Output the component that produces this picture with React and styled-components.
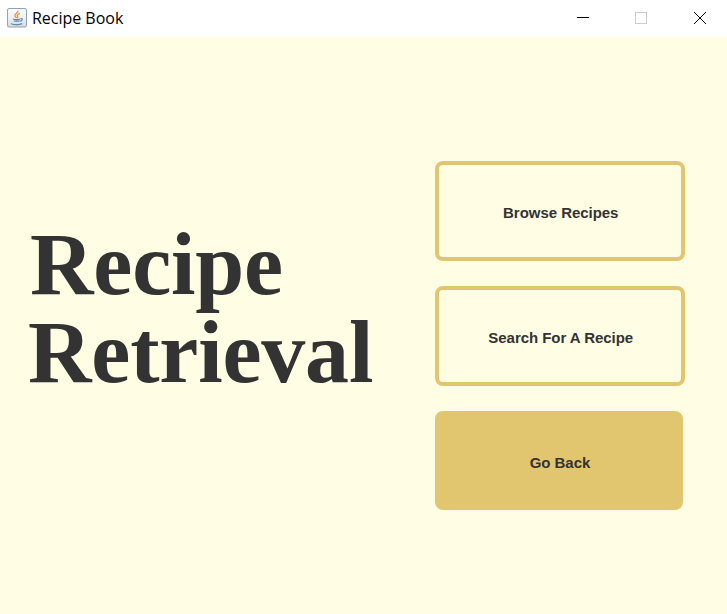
import React from "react";
import styled, { createGlobalStyle } from "styled-components";

const Global = createGlobalStyle`
  * { box-sizing: border-box; }
  body { margin: 0; background: #fffde3; }
`;
const Window = styled.div`
  width: 727px;
  height: 614px;
  display: flex;
  flex-direction: column;
  background: #fffde3;
  overflow: hidden;
`;
const TitleBar = styled.header`
  height: 37px;
  flex: none;
  display: flex;
  align-items: center;
  background: #fff;
  padding-left: 7px;
`;
const AppIcon = styled.svg`
  width: 20px;
  height: 20px;
  margin-bottom: 1px;
`;
const Title = styled.span`
  flex: 1;
  margin: 0 0 1px 5px;
  font: 16px/22px "Open Sans", "Noto Sans", sans-serif;
  letter-spacing: -0.02px;
  color: #000;
`;
const Controls = styled.div`
  display: flex;
  height: 36px;
  align-self: flex-start;
  margin-right: -3px;
`;
const Control = styled.button`
  width: ${(p) => p.$width || 58}px;
  height: 36px;
  padding: 0;
  border: 0;
  background: none;
  color: ${(p) => (p.$off ? "#ccc" : "#000")};
  svg {
    display: block;
    margin: 0 auto;
  }
`;
const Content = styled.main`
  flex: 1;
  display: flex;
  padding-left: 29px;
`;
const Heading = styled.h1`
  width: 406px;
  margin: 184px 0 0;
  font: bold 88px/88px "Liberation Serif", serif;
  letter-spacing: -0.2px;
  color: #333;
`;
const HeadingLine = styled.span`
  display: block;
  margin-left: ${(p) => p.$indent}px;
`;
const Actions = styled.nav`
  display: flex;
  flex-direction: column;
  gap: 25px;
  padding-top: 124px;
`;
const Action = styled.button`
  width: ${(p) => (p.$filled ? 248 : 249.5)}px;
  height: ${(p) => (p.$filled ? 99 : 100)}px;
  padding: ${(p) => (p.$filled ? "5px 0 0 2px" : "4px 0 0 2px")};
  border: 4px solid #e1c66f;
  border-radius: 8px;
  background: ${(p) => (p.$filled ? "#e1c66f" : "#fffde3")};
  font: bold 15px/18px "Liberation Sans", sans-serif;
  letter-spacing: -0.04px;
  color: #333;
`;

function JavaIcon() {
  return (
    <AppIcon viewBox="0 0 20 20">
      <defs>
        <linearGradient id="tile" x1="0" y1="0" x2="0" y2="1">
          <stop offset="0" stopColor="#fafcfd" />
          <stop offset=".5" stopColor="#edf1f4" />
          <stop offset="1" stopColor="#d0dae2" />
        </linearGradient>
      </defs>
      <rect x=".5" y=".5" width="19" height="18.5" rx="1.5" fill="url(#tile)" stroke="#8fa5b7" />
      <path d="M10.8 2.7c.8 2.1-3.7 3.1-2.8 5.3.3.8 1 1.3 1.6 2M12.8 5.4c-2 .8-3.1 1.6-2.3 2.8.6.9.4 1.4-.3 1.9" fill="none" stroke="#f09348" strokeWidth="1.4" />
      <path d="M6 11c2 .6 5.3.6 7 0M6.8 12.7c1.8.6 4.2.6 5.8 0M13.5 10.6c2.6-.5 2.2 2-.5 2.6M4.5 15.3c-1 1.6 9 1.8 10.5 0" fill="none" stroke="#6386a4" strokeWidth="1.2" />
    </AppIcon>
  );
}

export default function App() {
  return (
    <Window>
      <Global />
      <TitleBar>
        <JavaIcon />
        <Title>Recipe Book</Title>
        <Controls>
          <Control><svg width="12" height="12"><path d="M0 5.5h12" stroke="currentColor" /></svg></Control>
          <Control $off><svg width="12" height="12"><rect x=".5" y=".5" width="11" height="11" fill="none" stroke="currentColor" /></svg></Control>
          <Control $width={60}><svg width="12" height="12"><path d="M0 0L12 12M12 0L0 12" stroke="currentColor" /></svg></Control>
        </Controls>
      </TitleBar>
      <Content>
        <Heading>
          <HeadingLine $indent={1}>Recipe</HeadingLine>
          <HeadingLine $indent={-1}>Retrieval</HeadingLine>
        </Heading>
        <Actions>
          <Action>Browse Recipes</Action>
          <Action>Search For A Recipe</Action>
          <Action $filled>Go Back</Action>
        </Actions>
      </Content>
    </Window>
  );
}
